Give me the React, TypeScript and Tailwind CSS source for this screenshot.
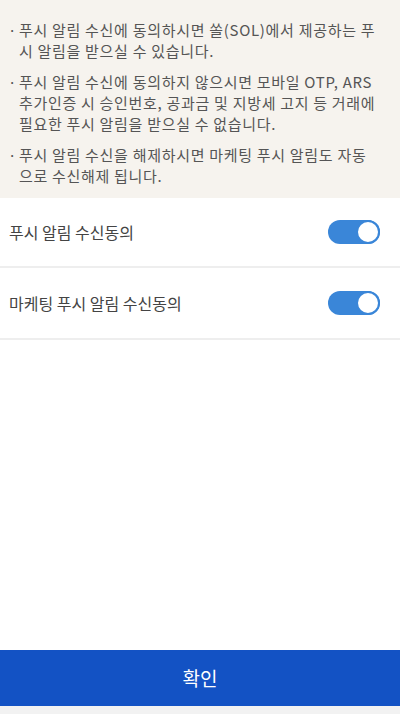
const notices = [
  ["푸시 알림 수신에 동의하시면 쏠(SOL)에서 제공하는 푸", "시 알림을 받으실 수 있습니다."],
  ["푸시 알림 수신에 동의하지 않으시면 모바일 OTP, ARS", "추가인증 시 승인번호, 공과금 및 지방세 고지 등 거래에", "필요한 푸시 알림을 받으실 수 없습니다."],
  ["푸시 알림 수신을 해제하시면 마케팅 푸시 알림도 자동", "으로 수신해제 됩니다."],
];

const Toggle = () => (
  <div className="w-[52px] h-[24px] rounded-full bg-[#3a86d8] relative">
    <div className="absolute right-0 top-0 w-[24px] h-[24px] rounded-full bg-white border-2 border-[#3a86d8]" />
  </div>
);

export default function App() {
  return (
    <div
      className="w-[400px] h-[714px] bg-white flex flex-col text-[#555]"
      style={{ fontFamily: '"Noto Sans CJK KR", "Noto Sans", sans-serif' }}
    >
      <div className="bg-[#f6f3ee] pt-[19px] pb-[14px] pl-[8px] pr-[8px] flex flex-col gap-[10px] h-[198px]">
        {notices.map((lines, i) => (
          <div key={i} className="flex text-[15px] leading-[21px] tracking-[0.7px] whitespace-nowrap">
            <span className="w-[11px] shrink-0">·</span>
            <div className="flex flex-col">
              {lines.map((l, j) => (
                <div key={j} className="h-[21px]">{l}</div>
              ))}
            </div>
          </div>
        ))}
      </div>

      <div className="flex items-center justify-between h-[70px] px-[9px] pr-[20px] border-b-2 border-[#eeeeee]">
        <span className="text-[16px] text-[#444]">푸시 알림 수신동의</span>
        <Toggle />
      </div>
      <div className="flex items-center justify-between h-[72px] px-[9px] pr-[20px] border-b-2 border-[#eeeeee]">
        <span className="text-[16px] text-[#444]">마케팅 푸시 알림 수신동의</span>
        <Toggle />
      </div>

      <div className="flex-1" />

      <button className="h-[56px] bg-[#1352c4] text-white text-[19px] flex items-center justify-center">
        확인
      </button>
      <div className="h-[8px] bg-[#f2f2f2]" />
    </div>
  );
}
